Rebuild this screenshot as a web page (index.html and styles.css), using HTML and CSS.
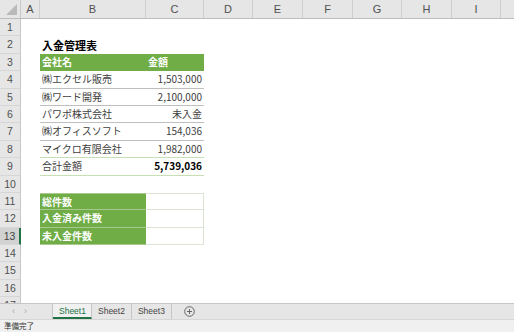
FILE: index.html
```html
<html>
<head>
    <link rel="stylesheet" href="styles.css">
</head>
<body>
<div id="app">
    <div class="sheet">
        <div class="colheads">
            <div class="corner"><div class="tri"></div></div>
            <div class="ch wa">A</div>
            <div class="ch wb">B</div>
            <div class="ch wc">C</div>
            <div class="ch wd">D</div>
            <div class="ch we">E</div>
            <div class="ch wf">F</div>
            <div class="ch wg">G</div>
            <div class="ch wh">H</div>
            <div class="ch wi">I</div>
            <div class="ch wj"></div>
        </div>
        <div class="row"><div class="rh">1</div></div>
        <div class="row"><div class="rh">2</div><div class="c wa"></div><div class="c wb title">入金管理表</div></div>
        <div class="row"><div class="rh">3</div><div class="c wa"></div><div class="c wb head">会社名</div><div class="c wc head">金額</div></div>
        <div class="row"><div class="rh">4</div><div class="c wa"></div><div class="c wb line">㈱エクセル販売</div><div class="c wc line num">1,503,000</div></div>
        <div class="row"><div class="rh">5</div><div class="c wa"></div><div class="c wb line">㈱ワード開発</div><div class="c wc line num">2,100,000</div></div>
        <div class="row"><div class="rh">6</div><div class="c wa"></div><div class="c wb line">パワポ株式会社</div><div class="c wc line num">未入金</div></div>
        <div class="row"><div class="rh">7</div><div class="c wa"></div><div class="c wb line">㈱オフィスソフト</div><div class="c wc line num">154,036</div></div>
        <div class="row"><div class="rh">8</div><div class="c wa"></div><div class="c wb gline">マイクロ有限会社</div><div class="c wc gline num">1,982,000</div></div>
        <div class="row"><div class="rh">9</div><div class="c wa"></div><div class="c wb gline">合計金額</div><div class="c wc gline num total">5,739,036</div></div>
        <div class="row"><div class="rh">10</div></div>
        <div class="row"><div class="rh">11</div><div class="c wa"></div><div class="c wb label first">総件数</div><div class="c wc box first"></div></div>
        <div class="row"><div class="rh">12</div><div class="c wa"></div><div class="c wb label">入金済み件数</div><div class="c wc box"></div></div>
        <div class="row"><div class="rh sel">13</div><div class="c wa"></div><div class="c wb label">未入金件数</div><div class="c wc box"></div></div>
        <div class="row"><div class="rh">14</div></div>
        <div class="row"><div class="rh">15</div></div>
        <div class="row"><div class="rh">16</div></div>
        <div class="row"><div class="rh">17</div></div>
    </div>
    <div class="tabbar">
        <div class="nav"><span>&#8249;</span><span>&#8250;</span></div>
        <div class="tab active">Sheet1</div>
        <div class="tab">Sheet2</div>
        <div class="tab">Sheet3</div>
        <div class="add">
            <svg width="11" height="11" viewBox="0 0 11 11">
                <circle cx="5.5" cy="5.5" r="4.8" fill="none" stroke="#666" stroke-width="1"/>
                <path d="M5.5 3v5M3 5.5h5" stroke="#666" stroke-width="1"/>
            </svg>
        </div>
    </div>
    <div class="status">準備完了</div>
</div>
</body>
</html>
```

FILE: styles.css
```css
body {
    margin: 0;
    font-family: "Noto Sans CJK JP", "Noto Sans", sans-serif;
}
#app {
    width: 514px;
    height: 332px;
    overflow: hidden;
    background: #fff;
}
.sheet {
    height: 303px;
    overflow: hidden;
}
.colheads {
    display: flex;
    height: 19px;
    background: #e6e6e6;
    border-bottom: 1px solid #bcbcbc;
    box-sizing: border-box;
}
.corner {
    width: 21px;
    flex: none;
    border-right: 1px solid #c9c9c9;
    box-sizing: border-box;
    position: relative;
}
.tri {
    position: absolute;
    right: 3px;
    bottom: 3px;
    width: 0;
    height: 0;
    border-left: 11px solid transparent;
    border-bottom: 11px solid #b9b9b9;
}
.ch {
    flex: none;
    font-family: "Liberation Sans", Arial, sans-serif;
    font-size: 11px;
    color: #505050;
    text-align: center;
    line-height: 18px;
    border-right: 1px solid #cfcfcf;
    box-sizing: border-box;
}
.wa { width: 19px; }
.wb { width: 106px; }
.wc { width: 58px; }
.wd { width: 49px; }
.we { width: 50px; }
.wf { width: 50px; }
.wg { width: 49px; }
.wh { width: 50px; }
.wi { width: 49px; }
.wj { width: 20px; }
.row {
    display: flex;
    height: 17.4px;
}
.rh {
    width: 21px;
    flex: none;
    background: #e6e6e6;
    border-right: 1px solid #c6c6c6;
    border-bottom: 1px solid #d6d6d6;
    box-sizing: border-box;
    font-family: "Liberation Sans", Arial, sans-serif;
    font-size: 10.5px;
    color: #505050;
    text-align: center;
    line-height: 17px;
}
.rh.sel {
    background: #d2d2d2;
    border-right: 2px solid #217346;
    color: #444;
}
.c {
    flex: none;
    box-sizing: border-box;
    font-size: 10px;
    line-height: 16px;
    color: #404040;
    padding: 0 2px;
    white-space: nowrap;
    overflow: hidden;
}
.title {
    font-size: 11px;
    font-weight: bold;
    color: #000;
    line-height: 18px;
    overflow: visible;
}
.head {
    background: #70ad47;
    color: #fff;
    font-weight: bold;
}
.line {
    border-bottom: 1px solid #bfbfbf;
}
.gline {
    border-bottom: 1px solid #c6e0b4;
}
.num {
    text-align: right;
}
.total {
    font-weight: bold;
    color: #000;
}
.label {
    background: #70ad47;
    color: #fff;
    font-weight: bold;
    border-bottom: 1px solid #a9c98f;
}
.box {
    border-bottom: 1px solid #dbe3d3;
    border-right: 1px solid #dbe3d3;
}
.label.first {
    border-top: 1px solid #a9c98f;
}
.box.first {
    border-top: 1px solid #dbe3d3;
}
.tabbar {
    display: flex;
    align-items: stretch;
    height: 15px;
    background: #e6e6e6;
    border-top: 1px solid #c6c6c6;
    font-family: "Liberation Sans", Arial, sans-serif;
    font-size: 8.5px;
    color: #444;
}
.nav {
    width: 53px;
    display: flex;
    gap: 9px;
    padding-left: 12px;
    box-sizing: border-box;
    color: #aaa;
    font-size: 9px;
    line-height: 14px;
    border-right: 1px solid #c6c6c6;
}
.tab {
    padding: 0 6px;
    line-height: 14px;
    border-right: 1px solid #c6c6c6;
}
.tab.active {
    width: 39px;
    box-sizing: border-box;
    text-align: center;
    color: #217346;
    background: #f0f0f0;
    border-bottom: 2px solid #217346;
}
.add {
    padding-left: 12px;
    display: flex;
    align-items: center;
}
.status {
    height: 12px;
    background: #f0f0f0;
    border-top: 1px solid #d6d6d6;
    border-bottom: 1px solid #7fa893;
    font-size: 7.5px;
    line-height: 12px;
    padding-left: 4px;
    color: #333;
}
```
